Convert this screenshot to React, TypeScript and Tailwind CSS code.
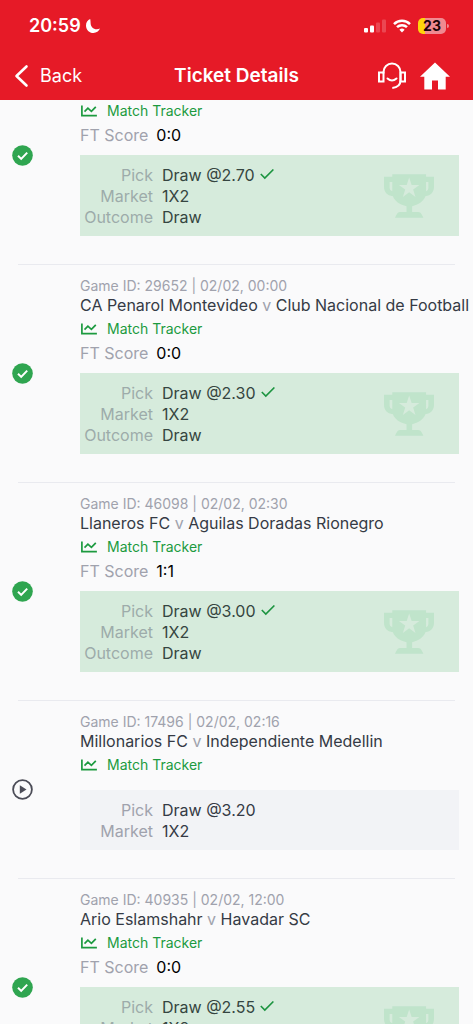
import React from "react";

type Game = {
  id: string;
  date?: string;
  home?: string;
  away?: string;
  score?: string;
  pick: string;
  market: string;
  outcome?: string;
};

const games: Game[] = [
  { id: "", score: "0:0", pick: "Draw @2.70", market: "1X2", outcome: "Draw" },
  {
    id: "29652",
    date: "02/02, 00:00",
    home: "CA Penarol Montevideo",
    away: "Club Nacional de Football",
    score: "0:0",
    pick: "Draw @2.30",
    market: "1X2",
    outcome: "Draw",
  },
  {
    id: "46098",
    date: "02/02, 02:30",
    home: "Llaneros FC",
    away: "Aguilas Doradas Rionegro",
    score: "1:1",
    pick: "Draw @3.00",
    market: "1X2",
    outcome: "Draw",
  },
  {
    id: "17496",
    date: "02/02, 02:16",
    home: "Millonarios FC",
    away: "Independiente Medellin",
    pick: "Draw @3.20",
    market: "1X2",
  },
  {
    id: "40935",
    date: "02/02, 12:00",
    home: "Ario Eslamshahr",
    away: "Havadar SC",
    score: "0:0",
    pick: "Draw @2.55",
    market: "1X2",
    outcome: "Draw",
  },
];

function MoonIcon() {
  return (
    <svg className="h-4 w-4" viewBox="0 0 16 16" fill="currentColor" aria-hidden="true">
      <path d="M5.200 1C2.600 2.100 1 4.500 1 7.400 1 11.600 4.300 15 8.400 15c3 0 5.500-1.700 6.600-4.400-1.100.4-2.100.6-3.200.6-3.700 0-6.200-2.600-6.200-6.300 0-1.400-.2-2.700-.4-3.900z" />
    </svg>
  );
}

function SignalIcon() {
  return (
    <svg className="h-[14px] w-[22px]" viewBox="0 0 22 14" fill="currentColor" aria-hidden="true">
      <rect x="0" y="9" width="4" height="4.500" rx="1" />
      <rect x="6" y="6.500" width="4" height="7" rx="1" />
      <rect x="12" y="3.500" width="4" height="10" rx="1" opacity="0.2" />
      <rect x="18" y="0.500" width="4" height="13" rx="1" opacity="0.2" />
    </svg>
  );
}

function WifiIcon() {
  return (
    <svg className="h-[14px] w-[18px]" viewBox="0 0 18 14" fill="none" stroke="currentColor" strokeWidth="2.500" aria-hidden="true">
      <path d="M1 5.100a11.500 11.500 0 0 1 16 0" />
      <path d="M4 8.200a7.200 7.200 0 0 1 10 0" />
      <path d="M6.400 10.700a3.800 3.800 0 0 1 5.200 0L9 13.500z" fill="currentColor" stroke="none" />
    </svg>
  );
}

function BackIcon() {
  return (
    <svg className="h-6 w-4" viewBox="0 0 16 24" fill="none" stroke="currentColor" strokeWidth="2.600" strokeLinecap="round" strokeLinejoin="round" aria-hidden="true">
      <path d="M12.500 2.500 2.500 12l10 9.500" />
    </svg>
  );
}

function SupportIcon() {
  return (
    <svg className="h-7 w-7" viewBox="0 0 28 28" fill="none" stroke="currentColor" strokeWidth="2" aria-hidden="true">
      <path d="M1 10.500h4.500v9H1zM22.500 10.500H27v9h-4.500z" />
      <path d="M5.500 11.500V10a8.500 8.500 0 0 1 17 0v8c0 4.500-3.200 7.500-8.200 8" />
      <path d="M9.500 16.500c2.700 2.300 6.300 2.300 9 0" strokeLinecap="round" />
    </svg>
  );
}

function HomeIcon() {
  return (
    <svg className="h-7 w-[30px]" viewBox="0 0 30 28" fill="currentColor" aria-hidden="true">
      <path d="M15 .5 30 14.800h-4.300V27.500h-7.700v-9h-6v9H4.300V14.800H0z" />
    </svg>
  );
}

function TrackerIcon() {
  return (
    <svg className="h-3 w-4" viewBox="0 0 16 12" fill="none" stroke="currentColor" strokeWidth="1.700" aria-hidden="true">
      <path d="M.9.500v10.200h15" />
      <path d="m3.500 6.700 3.400-3.500 3.500 3.200 4.400-4.600" />
    </svg>
  );
}

function WonIcon() {
  return (
    <svg className="h-[21px] w-[21px]" viewBox="0 0 21 21" role="img" aria-label="Won">
      <circle cx="10.500" cy="10.500" r="10.300" fill="#2fa550" />
      <path d="m6 10.700 3.200 3.200L15.200 7.600" fill="none" stroke="#fff" strokeWidth="2" />
    </svg>
  );
}

function RunningIcon() {
  return (
    <svg className="h-[21px] w-[21px]" viewBox="0 0 21 21" role="img" aria-label="Running">
      <circle cx="10.500" cy="10.500" r="9.400" fill="none" stroke="#4b4c57" strokeWidth="1.800" />
      <path d="M7.800 6.300v8.400l6.700-4.200z" fill="#4b4c57" />
    </svg>
  );
}

function CheckIcon() {
  return (
    <svg className="h-[11px] w-[14px]" viewBox="0 0 14 11" fill="none" stroke="#1c9440" strokeWidth="1.600" aria-hidden="true">
      <path d="m.8 5 4 4L13.400.5" />
    </svg>
  );
}

function TrophyIcon() {
  return (
    <svg className="h-11 w-[50px]" viewBox="0 0 151 132" aria-hidden="true">
      <path
        fill="#c0e4cb"
        fillRule="evenodd"
        d="M25 0H127V8H151V38C151 54 142 64 125 67C119 83 104 93 85 97V114H104Q110 114 113 120L119 132H33L39 120Q42 114 48 114H68V97C48 93 33 83 27 67C9 64 0 54 0 38V8H25ZM17 24V42Q17 50 25 52V24ZM127 24V52Q134 50 134 42V24Z"
      />
      <path fill="#d6ebdc" d="m76 10 7.500 22.500H107L88 46.500 95 69 76 55 57 69l7-22.500L45 32.500h23.500z" />
    </svg>
  );
}

function Header() {
  return (
    <header className="shrink-0 bg-[#e61a27] text-white">
      <div className="flex h-[52px] items-center justify-between pr-6 pl-[29px]">
        <div className="flex items-center gap-1">
          <span className="text-lg font-semibold">20:59</span>
          <MoonIcon />
        </div>
        <div className="flex items-center gap-[7px]">
          <SignalIcon />
          <WifiIcon />
          <div className="flex items-center gap-px">
            <span className="flex h-4 w-7 items-center justify-center rounded-[5px] bg-linear-to-r from-[#ffd60a] from-25% to-[#f08a91] to-25% text-sm font-bold text-[#1c0608]">
              23
            </span>
            <span className="h-1 w-0.5 rounded-r bg-[#f08a91]" />
          </div>
        </div>
      </div>
      <nav className="grid h-12 grid-cols-[1fr_auto_1fr] items-center px-[14px]">
        <button type="button" className="flex items-center gap-[10px] justify-self-start text-lg">
          <BackIcon />
          Back
        </button>
        <h1 className="text-[19px] font-semibold">Ticket Details</h1>
        <div className="flex items-center gap-[14px] justify-self-end pr-[9px]">
          <button type="button" aria-label="Support">
            <SupportIcon />
          </button>
          <a href="#home" aria-label="Home">
            <HomeIcon />
          </a>
        </div>
      </nav>
    </header>
  );
}

function Row({ label, won, children }: { label: string; won: boolean; children: React.ReactNode }) {
  return (
    <div className="flex h-[21px] items-center gap-[9px]">
      <dt className={won ? "w-[73px] text-right text-[#9dabaa]" : "w-[73px] text-right text-[#a0a2ad]"}>{label}</dt>
      <dd className={won ? "flex items-center gap-[5px] text-[#354540]" : "text-[#353a45]"}>{children}</dd>
    </div>
  );
}

function GameItem({ game }: { game: Game }) {
  const won = game.outcome !== undefined;
  return (
    <li>
      <div className="mx-[18px] h-px bg-[#e9eaef]" />
      <div className="flex items-center pr-[14px] pl-3">
        <div className="w-[68px] shrink-0">{won ? <WonIcon /> : <RunningIcon />}</div>
        <div className="min-w-0 grow pt-[11px] pb-7 text-base">
          {game.home ? (
            <>
              <p className="text-sm leading-[19px] text-[#a0a2ad]">
                Game ID: {game.id} | {game.date}
              </p>
              <h2 className="leading-5 whitespace-nowrap text-[#353a45]">
                {game.home} <span className="text-[#a0a2ad]">v</span> {game.away}
              </h2>
            </>
          ) : (
            <div className="h-[39px]" />
          )}
          <a href="#tracker" className="flex h-7 w-fit items-center gap-[10px] pl-px text-sm text-[#1c9a3f]">
            <TrackerIcon />
            Match Tracker
          </a>
          {game.score && (
            <p className="flex gap-2 leading-5 text-[#a0a2ad]">
              FT Score <span className="text-black">{game.score}</span>
            </p>
          )}
          <div
            className={
              won
                ? "mt-[10px] flex items-center justify-between bg-[#d6ebdc] py-[9px] pr-[25px]"
                : "mt-[11px] flex items-center justify-between bg-[#f2f3f6] py-[9px] pr-[25px]"
            }
          >
            <dl>
              <Row label="Pick" won={won}>
                {game.pick}
                {won && <CheckIcon />}
              </Row>
              <Row label="Market" won={won}>
                {game.market}
              </Row>
              {game.outcome && (
                <Row label="Outcome" won={won}>
                  {game.outcome}
                </Row>
              )}
            </dl>
            {won && <TrophyIcon />}
          </div>
        </div>
      </div>
    </li>
  );
}

export default function App() {
  return (
    <div className="flex h-screen flex-col bg-[#fafafb] font-['Inter',sans-serif]">
      <Header />
      <main className="min-h-0 grow overflow-y-auto [scrollbar-width:none]">
        <ul className="-mt-[54px]">
          {games.map((game) => (
            <GameItem key={game.id} game={game} />
          ))}
        </ul>
      </main>
    </div>
  );
}
